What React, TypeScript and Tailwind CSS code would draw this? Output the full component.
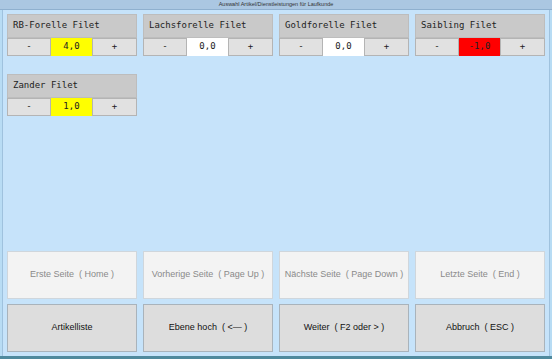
import React from "react"

type Artikel = { name: string; menge: string; farbe: string }

const artikel: Artikel[] = [
  { name: "RB-Forelle Filet", menge: "4,0", farbe: "bg-[#ffff00]" },
  { name: "Lachsforelle Filet", menge: "0,0", farbe: "bg-white" },
  { name: "Goldforelle Filet", menge: "0,0", farbe: "bg-white" },
  { name: "Saibling Filet", menge: "-1,0", farbe: "bg-[#ff0000]" },
  { name: "Zander Filet", menge: "1,0", farbe: "bg-[#ffff00]" },
]

function ArtikelKarte({ a }: { a: Artikel }) {
  return (
    <div className="flex flex-col">
      <div className="flex h-[24px] items-center border border-[#bdbdbd] bg-[#c9c9c9] pl-[5px] font-['DejaVu_Sans_Mono','Liberation_Mono',monospace] text-[9px] text-[#222]">
        {a.name}
      </div>
      <div className="flex h-[18px] font-['DejaVu_Sans_Mono','Liberation_Mono',monospace] text-[9px] text-[#222]">
        <button className="flex w-[44px] items-center justify-center border border-[#b4b4b4] bg-[#e1e1e1]">-</button>
        <div className={`flex w-[41px] items-center justify-center ${a.farbe}`}>{a.menge}</div>
        <button className="flex flex-1 items-center justify-center border border-[#b4b4b4] bg-[#e1e1e1]">+</button>
      </div>
    </div>
  )
}

const navigation = [
  "Erste Seite  ( Home )",
  "Vorherige Seite  ( Page Up )",
  "Nächste Seite  ( Page Down )",
  "Letzte Seite  ( End )",
]

const aktionen = ["Artikelliste", "Ebene hoch  ( <— )", "Weiter  ( F2 oder > )", "Abbruch  ( ESC )"]

export default function App() {
  return (
    <div className="flex h-[359px] w-[552px] flex-col bg-[#b8dcf4] font-['Liberation_Sans',Arial,sans-serif]">
      {/* Titelleiste */}
      <div className="flex h-[10px] items-center justify-center border-b border-[#8fb0cf] bg-[#abc7e2] text-[5.5px] text-[#333]">
        Auswahl Artikel/Dienstleistungen für Laufkunde
      </div>

      <div className="flex flex-1 flex-col border-b-[3px] border-b-[#4f8a9e] px-[2px]">
        <div className="flex flex-1 flex-col border-x border-x-[#9fc2de] bg-[#c6e3fa] px-[4px] pt-[4px] pb-[4px]">
          {/* Artikel */}
          <div className="grid grid-cols-4 gap-x-[6px] gap-y-[18px]">
            {artikel.map((a) => (
              <ArtikelKarte key={a.name} a={a} />
            ))}
          </div>

          <div className="flex-1" />

          {/* Navigation */}
          <div className="grid grid-cols-4 gap-x-[6px] gap-y-[5px]">
            {navigation.map((t) => (
              <button
                key={t}
                className="flex h-[48px] items-center justify-center whitespace-pre border border-[#cfd6dc] bg-[#f3f3f3] text-[9px] text-[#8a8a8a]"
              >
                {t}
              </button>
            ))}
            {aktionen.map((t) => (
              <button
                key={t}
                className="flex h-[48px] items-center justify-center whitespace-pre border border-[#a9b3bb] bg-[#dddddd] text-[9px] text-[#111]"
              >
                {t}
              </button>
            ))}
          </div>
        </div>
      </div>
    </div>
  )
}
